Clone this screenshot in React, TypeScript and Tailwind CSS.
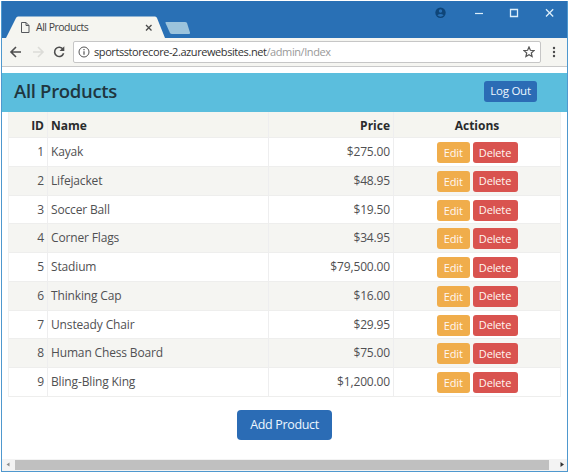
import React from 'react';

type Product = { id: number; name: string; price: string };

const products: Product[] = [
  { id: 1, name: 'Kayak', price: '$275.00' },
  { id: 2, name: 'Lifejacket', price: '$48.95' },
  { id: 3, name: 'Soccer Ball', price: '$19.50' },
  { id: 4, name: 'Corner Flags', price: '$34.95' },
  { id: 5, name: 'Stadium', price: '$79,500.00' },
  { id: 6, name: 'Thinking Cap', price: '$16.00' },
  { id: 7, name: 'Unsteady Chair', price: '$29.95' },
  { id: 8, name: 'Human Chess Board', price: '$75.00' },
  { id: 9, name: 'Bling-Bling King', price: '$1,200.00' },
];

const columns = 'grid grid-cols-[39px_221px_125px_168px]';

function TitleBar() {
  return (
    <div className="relative flex h-[37px] items-end bg-[#2970b5]">
      <svg className="absolute left-0 top-0" width="566" height="37" viewBox="0 0 566 37" fill="none">
        <path d="M4 37 14 17q.6-1.500 2-1.500H153q1.500 0 2 1.500L163 37Z" fill="#f5f5f0" />
        <path d="M164 21h19q1.500 0 2 1l3 9.500q.3 1.500-1 1.500h-17q-1.500 0-2-1l-4.500-10q-.3-1 .5-1Z" fill="#9bc3dc" />
        <path d="M19.500 21.500h4.500l3 3V31.500h-7.500ZM24 21.500v3h3" stroke="#55585c" />
        <path d="m144 24 5.500 5.500m0-5.500-5.500 5.500" stroke="#4a4a4a" strokeWidth="1.300" />
        <circle cx="438.500" cy="11.800" r="5.200" fill="#0e4579" />
        <circle cx="438.500" cy="10" r="1.700" fill="#2970b5" />
        <path d="M435.300 14.300q3.200-2.800 6.400 0-3.200 2.900-6.400 0Z" fill="#2970b5" />
        <path d="M473 12.500h8" stroke="#dceefa" strokeWidth="1.200" />
        <path d="M508.500 8.500h7v7h-7Z" stroke="#dceefa" strokeWidth="1.300" />
        <path d="m544 8.300 7.200 7.200m0-7.200-7.200 7.200" stroke="#dceefa" strokeWidth="1.300" />
      </svg>
      <span className="relative ml-[34px] h-[20px] text-[10.500px] leading-[19px] tracking-[-0.500px] text-[#444]">All Products</span>
    </div>
  );
}

function Toolbar() {
  return (
    <div className="flex h-[28px] items-center bg-[#f5f5f1]">
      <svg width="71" height="28" viewBox="0 0 71 28" fill="none" strokeWidth="1.600">
        <path d="M19 14H9m5-5-5 5 5 5" stroke="#4e4e4e" />
        <path d="M31 14h10m-5-5 5 5-5 5" stroke="#dcdcd8" />
        <path d="M61 11.300A4.600 4.600 0 1 0 61.600 15.300" stroke="#4e4e4e" />
        <path d="M62.300 8.300v4.800h-4.800Z" fill="#4e4e4e" />
      </svg>
      <div className="flex h-[22px] w-[468px] items-center rounded-[2px] border border-[#c6c6c6] bg-white">
        <svg className="ml-[4px] mr-[4px] shrink-0" width="12" height="12" viewBox="0 0 12 12" fill="none" stroke="#555">
          <circle cx="6" cy="6" r="5" />
          <path d="M6 5.200v3.600M6 3v1.200" strokeWidth="1.200" />
        </svg>
        <span className="grow text-[11px] leading-[18px] tracking-[-0.420px] text-[#333]">sportsstorecore-2.azurewebsites.net<span className="text-[#999]">/admin/Index</span></span>
        <svg className="mr-[5px]" width="12" height="12" viewBox="0 0 12 12" fill="none" stroke="#555" strokeWidth="1.200">
          <path d="m6 1 1.400 3.300 3.600.3-2.700 2.400.8 3.600L6 8.700l-3.100 1.900.8-3.600L1 4.600l3.600-.3Z" />
        </svg>
      </div>
      <svg className="ml-[10px]" width="6" height="14" viewBox="0 0 6 14" fill="#4a4a4a">
        <circle cx="3" cy="3" r="1.200" />
        <circle cx="3" cy="7" r="1.200" />
        <circle cx="3" cy="11" r="1.200" />
      </svg>
    </div>
  );
}

function Row({ product }: { product: Product }) {
  const stripe = product.id % 2 === 0 ? 'bg-[#f5f5f2]' : 'bg-white';
  return (
    <div className={`${columns} h-[28.750px] border-b border-[#eeeeed] text-[12px] leading-[27px] tracking-[-0.150px] text-[#505052] ${stripe}`}>
      <div className="border-r border-[#eeeeef] pr-[3px] text-right">{product.id}</div>
      <div className="border-r border-[#eeeeef] pl-[3px]">{product.name}</div>
      <div className="border-r border-[#eeeeef] pr-[3px] text-right">{product.price}</div>
      <div className="flex items-start gap-[3px] pl-[43px] pt-[4px] text-[11px] leading-[20px] text-[#fff7f2]">
        <button className="h-[21px] w-[32.500px] rounded-[3px] bg-[#f0ad4b] pt-px">Edit</button>
        <button className="h-[21px] w-[45px] rounded-[3px] bg-[#d9534f]">Delete</button>
      </div>
    </div>
  );
}

export default function App() {
  return (
    <div className="h-[474px] w-[570px] bg-white pl-px pt-px font-['Open_Sans','Noto_Sans',sans-serif]">
      <div className="flex h-[471px] w-[567px] flex-col border-x border-b border-[#4f98ce] bg-white">
        <TitleBar />
        <Toolbar />
        <div className="h-[7px] border-t border-[#c9c9c9]" />
        <header className="flex h-[39px] items-center justify-between bg-[#5bbedd] pl-[12px] pr-[30px]">
          <h1 className="-mt-[3px] text-[18.500px] font-semibold leading-[34px] tracking-[-0.320px] text-[#20363f]">All Products</h1>
          <button className="mb-[3px] h-[21px] w-[53px] rounded-[3px] bg-[#2b6cb5] text-[11.500px] leading-[20px] tracking-[-0.250px] text-[#edf7ff]">Log Out</button>
        </header>
        <main className="ml-[6px] w-[553px] border-l border-r border-[#f0f0ef]">
          <div className={`${columns} h-[26px] border-b border-[#eeeeed] bg-[#f5f5f0] text-[12px] font-bold leading-[28px] text-[#292b2c]`}>
            <div className="border-r border-[#eeeeef] pr-[3px] text-right">ID</div>
            <div className="border-r border-[#eeeeef] pl-[3px]">Name</div>
            <div className="border-r border-[#eeeeef] pr-[3px] text-right">Price</div>
            <div className="pr-[2px] text-center">Actions</div>
          </div>
          {products.map((product) => <Row key={product.id} product={product} />)}
        </main>
        <div className="flex grow items-start pl-[235px] pt-[13px]">
          <button className="h-[30px] w-[95px] rounded-[4px] bg-[#2b6cb5] text-[12.500px] leading-[30px] tracking-[-0.350px] text-[#edf7ff]">Add Product</button>
        </div>
        <div className="flex h-[12px] shrink-0 items-center bg-[#f3f3f3]">
          <svg className="mr-[4px]" width="9" height="12" viewBox="0 0 9 12" fill="#8b8b8b"><path d="M7.500 3.500v4L4.500 5.500Z" /></svg>
          <div className="h-[10px] w-[535px] bg-[#c0c0c0]" />
          <svg className="ml-[10px]" width="8" height="12" viewBox="0 0 8 12" fill="#333"><path d="M1.500 3v5l3.500-2.500Z" /></svg>
        </div>
      </div>
    </div>
  );
}
